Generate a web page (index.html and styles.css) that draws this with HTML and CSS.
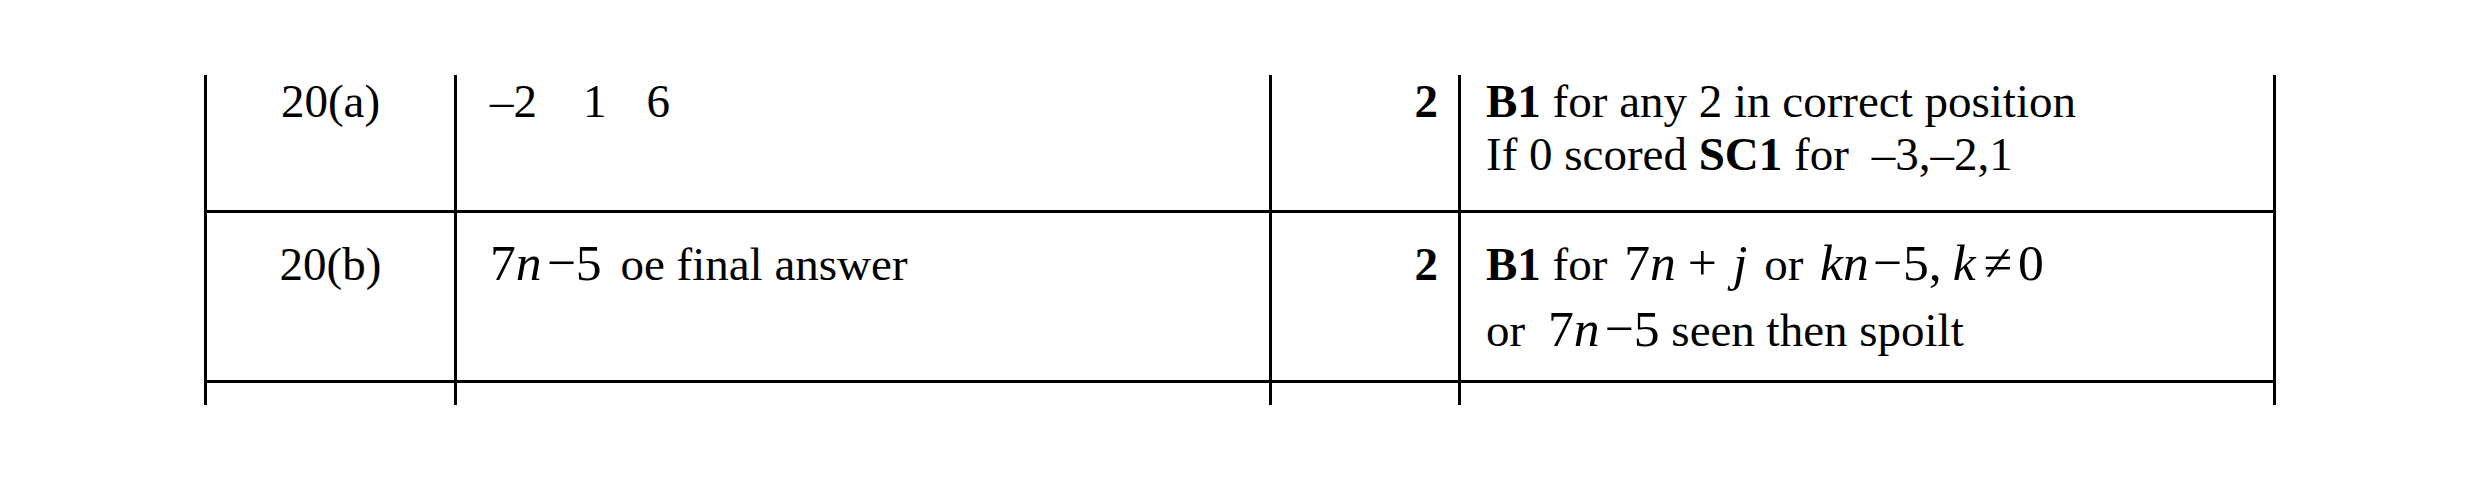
FILE: index.html
```html
<!DOCTYPE html>
<html lang="en">
<head>
<meta charset="utf-8">
<title>Mark scheme 20</title>
<link rel="stylesheet" href="styles.css">
</head>
<body>
<div class="sheet">
  <div class="grid">
    <div class="cell c1 r1">20(a)</div>
    <div class="cell c2 r1"><span>–2</span><span class="g1">1</span><span class="g2">6</span></div>
    <div class="cell c3 r1">2</div>
    <div class="cell c4 r1">
      <div class="ln"><b>B1</b> for any 2 in correct position</div>
      <div class="ln">If 0 scored <b>SC1</b> for <span class="lst">–3,–2,1</span></div>
    </div>

    <div class="cell c1 r2">20(b)</div>
    <div class="cell c2 r2"><span class="mth ans">7<i>n</i><span class="op mn">−</span>5</span> oe final answer</div>
    <div class="cell c3 r2">2</div>
    <div class="cell c4 r2">
      <div class="ln"><b>B1</b> for <span class="mth s5">7<i>n</i><span class="op pl">+</span><i class="jj">j</i></span> or <span class="mth s5"><i>kn</i><span class="op mn2">−</span>5,</span><span class="mth s10"><i>k</i><span class="op ne">≠</span>0</span></div>
      <div class="ln">or <span class="mth s11">7<i>n</i><span class="op mn">−</span>5</span> seen then spoilt</div>
    </div>

    <div class="cell c1 r3"></div>
    <div class="cell c2 r3"></div>
    <div class="cell c3 r3"></div>
    <div class="cell c4 r3"></div>
  </div>
</div>
</body>
</html>
```

FILE: styles.css
```css
html, body {
  margin: 0;
  padding: 0;
  background: #fff;
}

body {
  font-family: "Liberation Serif", "Times New Roman", serif;
  font-size: 47px;
  color: #000;
}

.sheet {
  padding: 75px 0 0 204px;
}

.grid {
  display: grid;
  grid-template-columns: 250px 815px 189px 818px;
  grid-template-rows: 138px 170px 22px;
}

.cell {
  box-sizing: border-box;
  border-left: 3px solid #000;
  white-space: nowrap;
}

.c4 {
  border-right: 3px solid #000;
  padding-left: 25px;
}

.r1, .r2 {
  border-bottom: 3px solid #000;
}

.r1 {
  line-height: 53px;
  padding-top: 0;
}

.r2 {
  line-height: 66px;
  padding-top: 18px;
}

.c1 {
  text-align: center;
}

.c2 {
  padding-left: 33px;
}

.c3 {
  text-align: right;
  padding-right: 20px;
  font-weight: bold;
}

.g1 {
  margin-left: 46px;
}

.g2 {
  margin-left: 40px;
}

.lst {
  margin-left: 11px;
}

i {
  font-style: italic;
}

b {
  font-weight: bold;
}

/* math objects are set slightly larger than the text */
.mth {
  font-size: 1.1em;
  line-height: 1;
}

.mth.s5 { margin-left: 5px; }
.mth.s10 { margin-left: 11px; }
.mth.s11 { margin-left: 11px; }
.mth.ans { margin-right: 7px; }

.op.pl { margin: 0 16px 0 12px; }
.op.mn { margin: 0 0 0 5px; }
.op.mn2 { margin: 0 1px 0 4px; }
.op.ne { margin: 0 6px 0 8px; }

.jj { margin-right: 5px; }
```
